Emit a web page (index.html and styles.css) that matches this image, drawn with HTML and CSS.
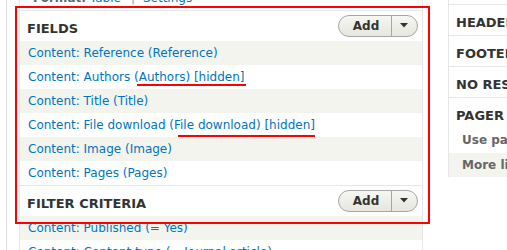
FILE: index.html
```html
<!DOCTYPE html>
<html lang="en">
<head>
    <meta charset="UTF-8">
    <meta name="viewport" content="width=device-width, initial-scale=1.0">
    <title>Views UI - Display</title>
    <link rel="stylesheet" href="styles.css">
</head>
<body>
    <div class="screen">
        <div class="rail">
            <div class="col-main">
                <div class="bucket">
                    <div class="option">
                        <span class="label">Format:</span>
                        <a href="#">Table</a><span class="sep">|</span><a href="#">Settings</a>
                    </div>
                </div>

                <div class="bucket">
                    <div class="bucket-head">
                        <h2>Fields</h2>
                        <div class="add-btn">
                            <span class="add-main">Add</span>
                            <span class="add-toggle">
                                <svg width="8" height="5" viewBox="0 0 8 5"><polygon points="0,0 8,0 4,4.5" fill="#333"/></svg>
                            </span>
                        </div>
                    </div>
                    <ul class="rows">
                        <li><a href="#">Content: Reference (Reference)</a></li>
                        <li><a href="#">Content: Authors <span class="mark mark-a">(Authors) [hidden]</span></a></li>
                        <li><a href="#">Content: Title (Title)</a></li>
                        <li><a href="#">Content: File download <span class="mark mark-b">(File download) [hidden]</span></a></li>
                        <li><a href="#">Content: Image (Image)</a></li>
                        <li><a href="#">Content: Pages (Pages)</a></li>
                    </ul>
                </div>

                <div class="bucket">
                    <div class="bucket-head">
                        <h2>Filter criteria</h2>
                        <div class="add-btn">
                            <span class="add-main">Add</span>
                            <span class="add-toggle">
                                <svg width="8" height="5" viewBox="0 0 8 5"><polygon points="0,0 8,0 4,4.5" fill="#333"/></svg>
                            </span>
                        </div>
                    </div>
                    <ul class="rows">
                        <li><a href="#">Content: Published (= Yes)</a></li>
                        <li><a href="#">Content: Content type (= Journal article)</a></li>
                    </ul>
                </div>
            </div>

            <div class="col-side">
                <div class="bucket">
                    <div class="bucket-head"><h2>Header</h2></div>
                </div>
                <div class="bucket">
                    <div class="bucket-head"><h2>Footer</h2></div>
                </div>
                <div class="bucket">
                    <div class="bucket-head"><h2>No results behavior</h2></div>
                </div>
                <div class="bucket last">
                    <div class="bucket-head"><h2>Pager</h2></div>
                    <ul class="rows options">
                        <li><span class="label">Use pager:</span> <a href="#">Display a specified number of items</a> | <a href="#">10 items</a></li>
                        <li><span class="label">More link:</span> <a href="#">No</a></li>
                    </ul>
                </div>
            </div>
        </div>

        <!-- annotation frame -->
        <div class="annotation"></div>
    </div>
</body>
</html>
```

FILE: styles.css
```css
* {
    margin: 0;
    padding: 0;
    box-sizing: border-box;
}

html, body {
    width: 507px;
    height: 250px;
    overflow: hidden;
    background: white;
}

body {
    font-family: 'DejaVu Sans', Verdana, sans-serif;
    font-size: 12px;
    color: #333;
}

a {
    color: #0074bd;
    text-decoration: none;
}

.screen {
    position: relative;
    height: 250px;
}

.rail {
    display: flex;
    align-items: flex-start;
    margin-left: 6px;
    padding-left: 12px;
    border-left: 1px solid #dcdcdc;
    height: 250px;
}

.col-main {
    flex: 0 0 404px;
    margin-top: -14px;
    border-left: 1px solid #e6e6e6;
    border-right: 1px solid #e6e6e6;
}

.col-side {
    flex: 0 0 320px;
    margin-left: 25px;
    padding-top: 4px;
    border-left: 1px solid #e6e6e6;
}

.col-side .bucket:first-child {
    border-top: 1px solid #e6e6e6;
}

.bucket {
    border-bottom: 1px solid #e6e6e6;
}

.bucket.last {
    border-bottom: none;
}

.option {
    height: 24px;
    line-height: 24px;
    padding-left: 13px;
    white-space: nowrap;
}

.label {
    font-weight: bold;
    color: #666;
}

.sep {
    color: #8a9fb0;
    margin: 0 8px 0 10px;
}

.bucket-head {
    height: 30px;
    display: flex;
    align-items: center;
    justify-content: space-between;
    padding: 0 4px 0 7px;
}

.bucket-head h2 {
    font-size: 13px;
    line-height: 15px;
    font-weight: bold;
    text-transform: uppercase;
    color: #333;
    padding-top: 4px;
    white-space: nowrap;
}

.add-btn {
    display: flex;
    height: 22px;
    width: 80px;
    margin-bottom: 1px;
    border: 1px solid #a6a6a6;
    border-radius: 11px;
    background: linear-gradient(#f7f7f3, #e6e6de);
    overflow: hidden;
}

.add-main {
    flex: 0 0 53px;
    display: flex;
    align-items: center;
    justify-content: center;
    font-weight: bold;
    font-size: 12px;
    color: #333;
    border-right: 1px solid #a6a6a6;
    padding-left: 2px;
}

.add-toggle {
    flex: 1;
    display: flex;
    align-items: center;
    justify-content: center;
    padding-right: 1px;
}

.rows {
    list-style: none;
}

.rows li {
    height: 24px;
    line-height: 24px;
    padding-left: 8px;
    white-space: nowrap;
}

.rows li:nth-child(odd) {
    background-color: #f3f4ee;
}

.options li {
    padding-left: 13px;
}

.options li:first-child {
    height: 25px;
    line-height: 25px;
}

.options li:nth-child(odd) {
    background-color: white;
}

.options li:nth-child(even) {
    background-color: #f3f4ee;
}

/* red marker lines */
.mark {
    position: relative;
}

.mark::after {
    content: '';
    position: absolute;
    height: 2px;
    background: #f00;
}

.mark-a::after {
    left: 3px;
    right: -2px;
    bottom: -2px;
}

.mark-b::after {
    left: 9px;
    right: 0;
    bottom: -5px;
}

.annotation {
    position: absolute;
    left: 15px;
    top: 6px;
    width: 415px;
    height: 218px;
    border: 2px solid #f00;
    pointer-events: none;
}
```
